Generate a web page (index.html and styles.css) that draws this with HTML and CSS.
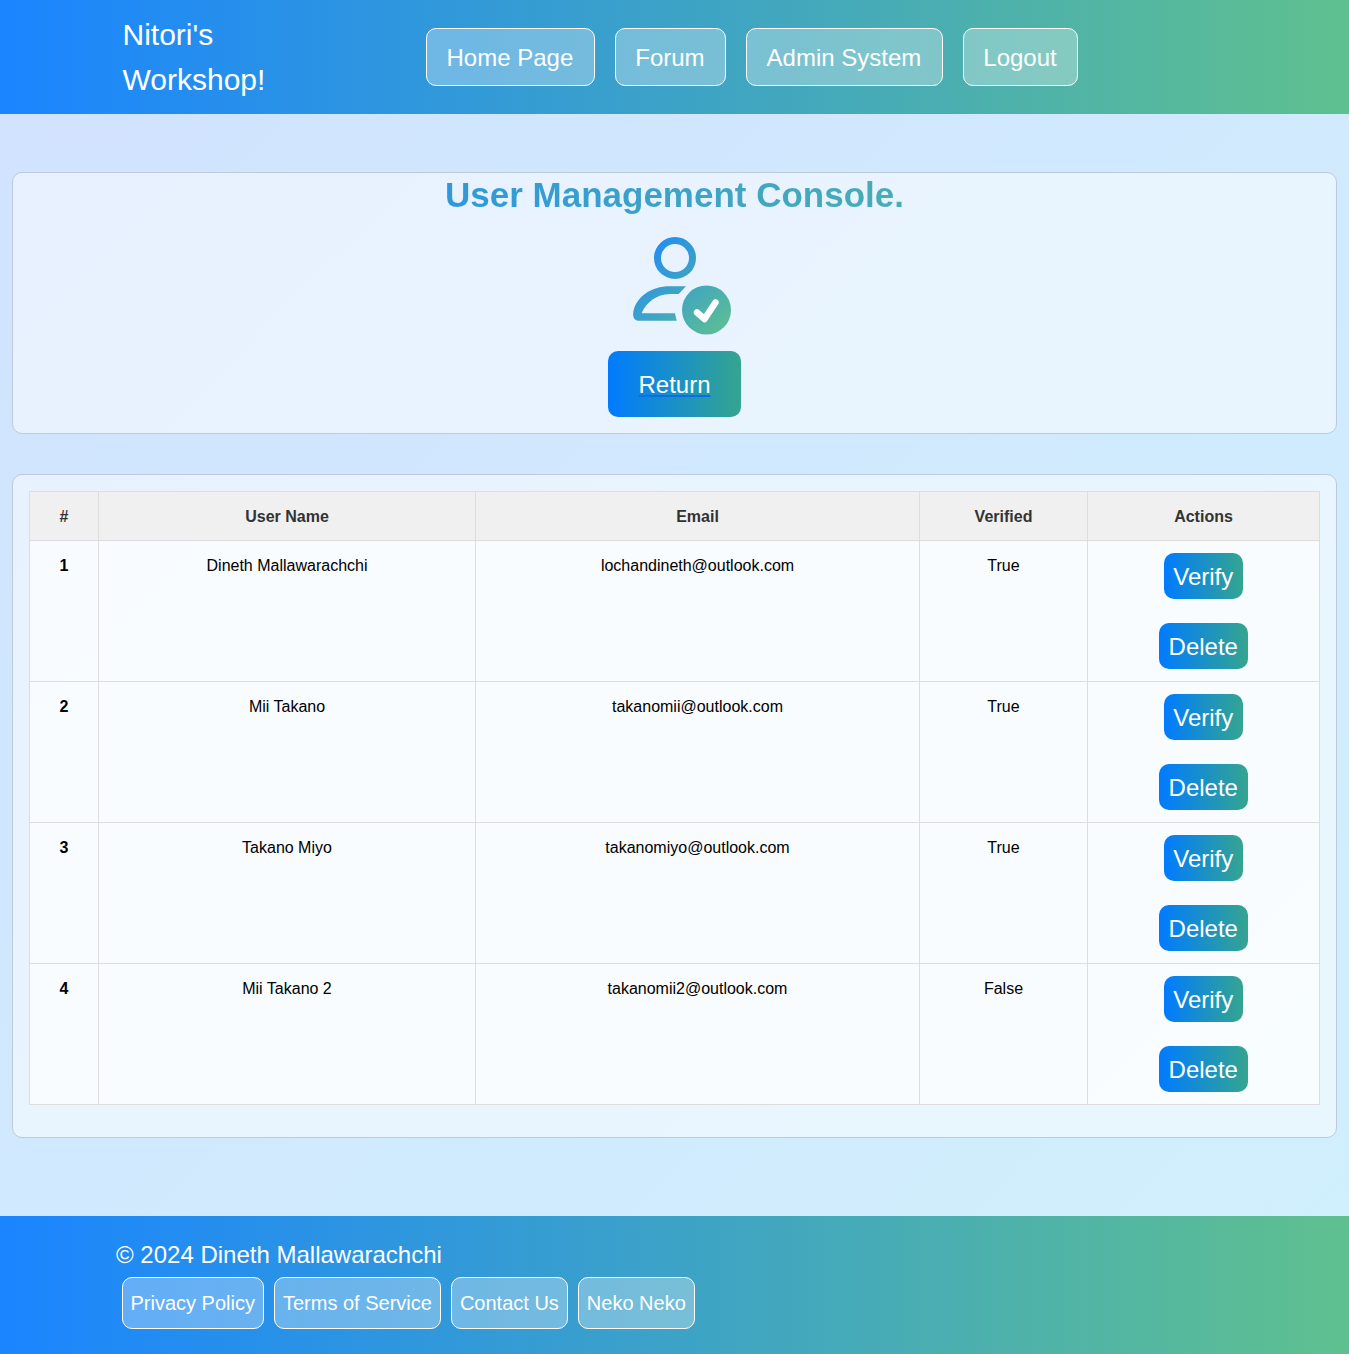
FILE: index.html
```html
<!DOCTYPE html>
<html lang="en">
<head>
    <meta charset="UTF-8">
    <meta name="viewport" content="width=device-width, initial-scale=1.0">
    <title>User Management Console</title>
    <link rel="stylesheet" href="styles.css">
</head>
<body>

    <header class="topbar">
        <div class="brand">Nitori's Workshop!</div>
        <nav class="topnav">
            <a class="glass-link" href="#">Home Page</a>
            <a class="glass-link" href="#">Forum</a>
            <a class="glass-link" href="#">Admin System</a>
            <a class="glass-link" href="#">Logout</a>
        </nav>
    </header>

    <main class="content">

        <section class="panel panel-title">
            <h1 class="console-title">User Management Console.</h1>
            <svg class="console-icon" width="120" height="100" viewBox="0 0 120 100">
                <defs>
                    <linearGradient id="iconGrad" gradientUnits="userSpaceOnUse" x1="20" y1="0" x2="112" y2="100">
                        <stop offset="0" stop-color="#1a85ff"/>
                        <stop offset="1" stop-color="#5fc08f"/>
                    </linearGradient>
                </defs>
                <circle cx="60" cy="23" r="17.5" fill="none" stroke="url(#iconGrad)" stroke-width="7"/>
                <path fill="url(#iconGrad)" d="M71 51.3H55C35.500 51.3 21.500 62 18.300 76.700C17.500 82 19.500 85.700 23.300 85.700H61.700L60 78.300H26.700C30.500 68 41.500 59 55 59H63.700Z"/>
                <circle cx="91.500" cy="75" r="24.500" fill="url(#iconGrad)"/>
                <path d="M82 77.500L89.500 84L100.500 67.500" fill="none" stroke="#ffffff" stroke-width="6.500" stroke-linecap="round" stroke-linejoin="round"/>
            </svg>
            <button class="grad-btn return-btn"><span class="return-label">Return</span></button>
        </section>

        <section class="panel panel-table">
            <table class="user-table">
                <thead>
                    <tr>
                        <th class="col-id">#</th>
                        <th class="col-name">User Name</th>
                        <th class="col-email">Email</th>
                        <th class="col-verified">Verified</th>
                        <th class="col-actions">Actions</th>
                    </tr>
                </thead>
                <tbody>
                    <tr>
                        <th>1</th>
                        <td>Dineth Mallawarachchi</td>
                        <td>lochandineth@outlook.com</td>
                        <td>True</td>
                        <td class="cell-actions"><div class="actions"><button class="grad-btn small-btn">Verify</button><button class="grad-btn small-btn">Delete</button></div></td>
                    </tr>
                    <tr>
                        <th>2</th>
                        <td>Mii Takano</td>
                        <td>takanomii@outlook.com</td>
                        <td>True</td>
                        <td class="cell-actions"><div class="actions"><button class="grad-btn small-btn">Verify</button><button class="grad-btn small-btn">Delete</button></div></td>
                    </tr>
                    <tr>
                        <th>3</th>
                        <td>Takano Miyo</td>
                        <td>takanomiyo@outlook.com</td>
                        <td>True</td>
                        <td class="cell-actions"><div class="actions"><button class="grad-btn small-btn">Verify</button><button class="grad-btn small-btn">Delete</button></div></td>
                    </tr>
                    <tr>
                        <th>4</th>
                        <td>Mii Takano 2</td>
                        <td>takanomii2@outlook.com</td>
                        <td>False</td>
                        <td class="cell-actions"><div class="actions"><button class="grad-btn small-btn">Verify</button><button class="grad-btn small-btn">Delete</button></div></td>
                    </tr>
                </tbody>
            </table>
        </section>

    </main>

    <footer class="bottombar">
        <p class="copyright">© 2024 Dineth Mallawarachchi</p>
        <nav class="bottomnav">
            <a class="glass-link" href="#">Privacy Policy</a>
            <a class="glass-link" href="#">Terms of Service</a>
            <a class="glass-link" href="#">Contact Us</a>
            <a class="glass-link" href="#">Neko Neko</a>
        </nav>
    </footer>

</body>
</html>
```

FILE: styles.css
```css
*{
    box-sizing: border-box;
}

body{
    margin: 0;
    font-family: "Liberation Sans", Arial, sans-serif;
    font-size: 16px;
    line-height: 1.5;
    color: #000000;
    background: linear-gradient(135deg, #d1e2ff, #d0f0fc);
}

/* top bar */
.topbar{
    display: flex;
    align-items: center;
    height: 114px;
    padding-left: 122.5px;
    background: linear-gradient(90deg, #1a85ff, #5fc08f);
    color: #ffffff;
}

.brand{
    width: 303.5px;
    padding-right: 130px;
    font-size: 30px;
}

.topnav{
    display: flex;
    gap: 20px;
}

.glass-link{
    display: block;
    color: #ffffff;
    text-decoration: none;
    background: rgba(255, 255, 255, 0.3);
    border: 1px solid #ffffff;
    border-radius: 10px;
}

.topnav .glass-link{
    padding: 11px 20.5px 9px 19.5px;
    font-size: 24px;
}

/* main area */
.content{
    padding: 58px 12px 78px 12px;
}

.panel{
    background: rgba(255, 255, 255, 0.5);
    border: 1px solid #bccadd;
    border-radius: 10px;
    padding: 0 16px 16px 16px;
}

.panel-title{
    display: flex;
    flex-direction: column;
    align-items: center;
    margin-bottom: 40px;
}

/* el degradado ocupa todo el ancho del panel, no solo el texto */
.console-title{
    align-self: stretch;
    margin: 0 0 18px 0;
    font-size: 35px;
    line-height: 44px;
    font-weight: bold;
    text-align: center;
    background: linear-gradient(90deg, #1a85ff, #5fc08f);
    -webkit-background-clip: text;
    background-clip: text;
    color: transparent;
}

.console-icon{
    display: block;
    margin-bottom: 16px;
}

.grad-btn{
    border: none;
    color: #ffffff;
    font-family: inherit;
    background: linear-gradient(90deg, #007bff, #34a58f);
    cursor: pointer;
}

.return-btn{
    padding: 16px 30px 14px 30px;
    font-size: 24px;
    line-height: 36px;
    border-radius: 10px;
}

.return-label{
    text-decoration: underline;
    text-decoration-color: #0b6fe0;
}

.panel-table{
    padding-top: 16px;
}

/* table */
.user-table{
    width: 100%;
    margin-bottom: 16px;
    border-collapse: collapse;
    table-layout: fixed;
    background: rgba(255, 255, 255, 0.7);
}

.user-table th,
.user-table td{
    padding: 13px 12px 11px 12px;
    border: 1px solid #dddddd;
    text-align: center;
    vertical-align: top;
}

.user-table thead th{
    background: #f0f0f0;
    color: #333333;
}

.user-table td.cell-actions{
    padding: 12px;
}

.col-id{ width: 69px; }
.col-name{ width: 377px; }
.col-email{ width: 444px; }
.col-verified{ width: 168px; }

.actions{
    display: flex;
    flex-direction: column;
    align-items: center;
    gap: 24px;
}

.small-btn{
    padding: 6px 10px 4px 9.5px;
    font-size: 24px;
    line-height: 36px;
    border-radius: 10px;
}

/* footer */
.bottombar{
    height: 138px;
    padding: 21px 0 0 116px;
    background: linear-gradient(90deg, #1a85ff, #5fc08f);
    color: #ffffff;
}

.copyright{
    margin: 0 0 4px 0;
    font-size: 24px;
}

.bottomnav{
    display: flex;
    gap: 10px;
    padding-left: 6px;
}

.bottomnav .glass-link{
    padding: 10px 8.5px 10px 7.5px;
    font-size: 20px;
}
```
